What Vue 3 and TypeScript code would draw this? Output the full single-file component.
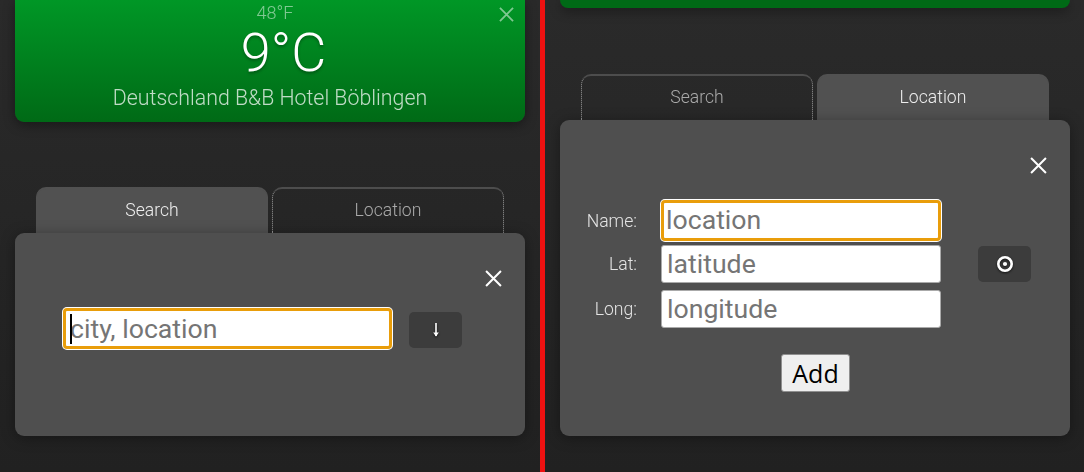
<script setup lang="ts">
const rows = [
  { label: 'Name:', hint: 'location', focused: true },
  { label: 'Lat:', hint: 'latitude', focused: false },
  { label: 'Long:', hint: 'longitude', focused: false },
];
</script>

<template>
  <div class="screen">
    <section class="pane first">
      <div class="card tall">
        <div class="fahr">48°F</div>
        <div class="temp">9°C</div>
        <div class="place">Deutschland B&amp;B Hotel Böblingen</div>
        <svg class="close dim" viewBox="0 0 16 16">
          <path d="M1 1 15 15M15 1 1 15" />
        </svg>
      </div>
      <div class="tabs gap-left">
        <div class="tab active">Search</div>
        <div class="tab">Location</div>
      </div>
      <div class="panel search">
        <svg class="close" viewBox="0 0 16 16">
          <path d="M1 1 15 15M15 1 1 15" />
        </svg>
        <div class="search-row">
          <div class="field">
            <input class="box focused" type="text" placeholder="city, location" />
            <span class="caret"></span>
          </div>
          <button class="icon-btn down">
            <svg width="12" height="16" viewBox="0 0 12 16">
              <path class="arrow" d="M6 1V14" />
              <path class="head" d="M3.2 10.5H8.8L6 14.5Z" />
            </svg>
          </button>
        </div>
      </div>
    </section>

    <div class="divider"></div>

    <section class="pane second">
      <div class="card short"></div>
      <div class="tabs gap-right">
        <div class="tab">Search</div>
        <div class="tab active">Location</div>
      </div>
      <div class="panel location">
        <svg class="close" viewBox="0 0 16 16">
          <path d="M1 1 15 15M15 1 1 15" />
        </svg>
        <div class="form-body">
          <div class="rows">
            <div v-for="row in rows" :key="row.label" class="row" :class="{ big: row.focused }">
              <label>{{ row.label }}</label>
              <input class="box" :class="{ focused: row.focused }" type="text" :placeholder="row.hint" />
            </div>
          </div>
          <button class="icon-btn locate">
            <svg width="18" height="18" viewBox="0 0 18 18">
              <circle cx="9" cy="9" r="6.7" fill="none" stroke="#fff" stroke-width="2.6" />
              <circle cx="9" cy="9" r="2.1" fill="#fff" />
            </svg>
          </button>
        </div>
        <button class="add">Add</button>
      </div>
    </section>
  </div>
</template>

<style>
body {
  margin: 0;
  background: #222;
}
</style>

<style scoped>
.screen {
  display: flex;
  width: 1084px;
  height: 472px;
  overflow: hidden;
  font-family: Roboto, sans-serif;
  font-weight: 300;
  color: #fff;
}

.pane {
  height: 472px;
  box-sizing: border-box;
  background: linear-gradient(#2a2a2a, #212121);
}

.pane.first {
  width: 540px;
  padding: 0 15px;
}

.pane.second {
  width: 539px;
  padding: 0 14px 0 15px;
}

.divider {
  width: 5px;
  background: #ee1111;
}

.card {
  position: relative;
  box-sizing: border-box;
  text-align: center;
  border-radius: 0 0 9px 9px;
  background: linear-gradient(#009726, #006a16);
  box-shadow: 0 3px 12px rgba(0, 0, 0, 0.4);
}

.card.tall {
  height: 122px;
}

.card.short {
  height: 8px;
  background: #006a16;
}

.fahr {
  padding: 2px 0 0 10px;
  font-size: 18px;
  line-height: 21px;
  opacity: 0.5;
}

.temp {
  padding-left: 27px;
  font-size: 54px;
  line-height: 60px;
  text-shadow: 0 2px 3px rgba(0, 0, 0, 0.3);
}

.place {
  margin-top: 1px;
  font-size: 21.33px;
  line-height: 28px;
  opacity: 0.75;
}

.close {
  position: absolute;
  top: 37px;
  right: 23px;
  width: 17px;
  height: 17px;
}

.close path {
  fill: none;
  stroke: #fff;
  stroke-width: 1.9;
}

.close.dim {
  top: 7px;
  right: 11px;
  width: 15px;
  height: 15px;
  opacity: 0.5;
}

.tabs {
  display: flex;
  gap: 4px;
  padding: 0 21px;
}

.gap-left {
  margin-top: 65px;
}

.gap-right {
  margin-top: 66px;
}

.tab {
  flex: 1;
  box-sizing: border-box;
  height: 46px;
  padding-top: 9px;
  text-align: center;
  font-size: 17.6px;
  line-height: 24px;
  color: #aaa;
  border-top: 2px solid #4d4d4d;
  border-left: 1px dotted #999;
  border-right: 1px dotted #999;
  border-radius: 10px 10px 0 0;
  opacity: 0.999;
}

.tab.active {
  color: #eee;
  background: #515151;
  border-color: #515151;
  border-style: solid;
}

.panel {
  position: relative;
  box-sizing: border-box;
  height: 203px;
  background: #4f4f4f;
  border-radius: 9px;
  box-shadow: 0 2px 14px rgba(0, 0, 0, 0.35);
}

.panel.location {
  height: 316px;
  padding-top: 80px;
}

.panel.search {
  padding: 75px 0 0 48px;
}

.search-row {
  display: flex;
  align-items: center;
  gap: 17px;
}

.field {
  position: relative;
  width: 329px;
}

.caret {
  position: absolute;
  left: 7px;
  top: 6px;
  width: 1.5px;
  height: 30px;
  background: #000;
}

.box {
  display: block;
  box-sizing: border-box;
  width: 280px;
  height: 38px;
  padding: 0 5px;
  font-family: Roboto, sans-serif;
  font-weight: 400;
  font-size: 26.67px;
  color: #000;
  background: #fff;
  border: 1px solid #aaa;
  border-radius: 3px;
  outline: none;
}

.box::placeholder {
  color: #757575;
}

.box.focused {
  width: 100%;
  height: 41px;
  padding: 0 4px;
  border: 3px solid #e99d0a;
  border-radius: 4px;
  box-shadow: 0 0 0 1px #fff;
}

.icon-btn {
  display: flex;
  align-items: center;
  justify-content: center;
  width: 53px;
  height: 36px;
  padding: 0;
  background: #3c3c3c;
  border: none;
  border-radius: 5px;
}

.icon-btn svg {
  filter: drop-shadow(0 1px 1px rgba(0, 0, 0, 0.7));
}

.down {
  margin-top: 2px;
}

.arrow {
  fill: none;
  stroke: #fff;
  stroke-width: 1.6;
}

.head {
  fill: #fff;
}

.form-body {
  display: flex;
  align-items: center;
  gap: 37px;
}

.rows {
  display: flex;
  flex-direction: column;
  gap: 7px;
}

.row {
  display: flex;
  align-items: center;
  gap: 24px;
}

.row label {
  width: 77px;
  text-align: right;
  font-size: 17.6px;
  color: #e4e4e4;
  opacity: 0.999;
}

.row.big {
  margin-bottom: -3px;
}

.row.big .box {
  width: 280px;
  padding: 0 2px 2px;
}

.add {
  display: block;
  box-sizing: border-box;
  width: 69px;
  height: 38px;
  margin: 26px 0 0 221px;
  padding: 0;
  font-family: "Open Sans", sans-serif;
  font-size: 25px;
  color: #000;
  background: #efefef;
  border: 1px solid #8f8f8f;
  border-radius: 3px;
}
</style>
